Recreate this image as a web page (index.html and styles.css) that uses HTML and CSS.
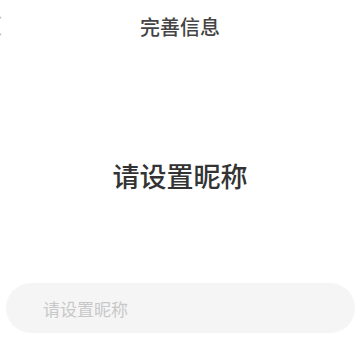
FILE: index.html
```html
<!DOCTYPE html>
<html lang="zh-CN">

<head>
    <meta charset="UTF-8">
    <meta name="viewport" content="width=device-width, initial-scale=1.0">
    <title>完善信息</title>
    <link rel="stylesheet" href="styles.css">
</head>

<body>

    <div class="bar">
        <svg class="back" width="14" height="22" viewBox="0 0 14 22">
            <path d="M13 2 L3 11 L13 20" fill="none" stroke="#bbb" stroke-width="1.5" />
        </svg>
        <h1 class="title">完善信息</h1>
    </div>

    <div class="tip">
        <h2>请设置昵称</h2>
    </div>

    <div class="field">
        <input type="text" class="txt" placeholder="请设置昵称">
    </div>

</body>

</html>
```

FILE: styles.css
```css
body {
    margin: 0;
    background-color: #fff;
    font-family: "Noto Sans CJK SC", "Noto Sans", sans-serif;
}

.bar {
    position: relative;
    height: 52px;
    display: flex;
    align-items: center;
    justify-content: center;
}

.back {
    position: absolute;
    left: -12px;
    top: 15px;
}

.title {
    margin: 0;
    font-size: 20px;
    font-weight: 500;
    color: #444;
}

.tip {
    padding-top: 98px;
    height: 133px;
    box-sizing: border-box;
    text-align: center;
}

.tip>h2 {
    margin: 0;
    font-size: 27px;
    font-weight: 500;
    line-height: 52px;
    color: #333;
}

.field {
    padding: 98px 5px 0 6px;
}

.txt {
    display: block;
    width: 100%;
    height: 50px;
    box-sizing: border-box;
    border: none;
    outline: none;
    border-radius: 25px;
    background-color: #f5f5f5;
    padding: 0 0 0 37px;
    font-family: inherit;
    font-size: 17px;
    color: #333;
}

.txt::placeholder {
    color: #c8c8c8;
}
```
